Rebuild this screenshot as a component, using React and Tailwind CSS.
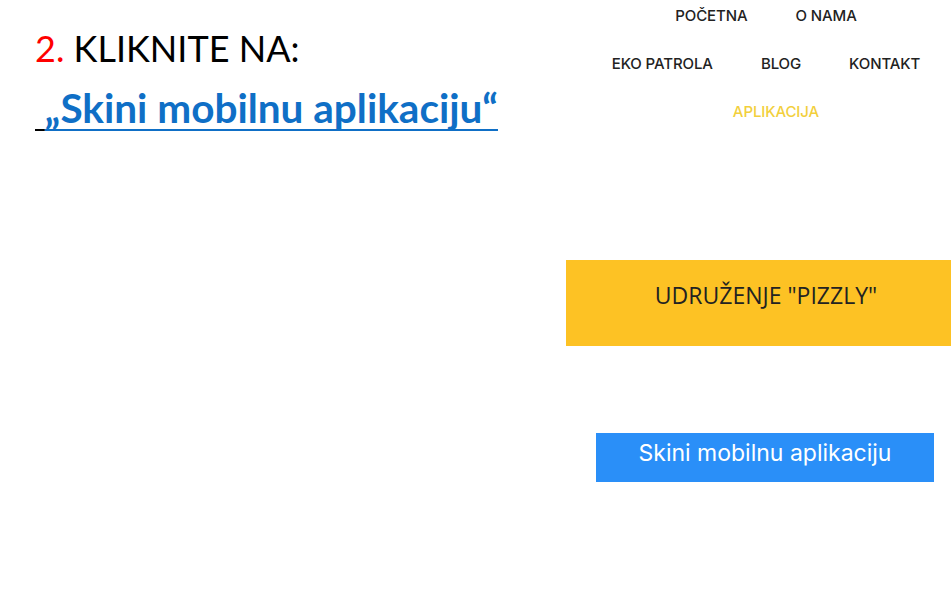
import React from "react";

const navRows = [
  ["POČETNA", "O NAMA"],
  ["EKO PATROLA", "BLOG", "KONTAKT"],
];

export default function App() {
  return (
    <div className="w-[951px] h-[613px] overflow-hidden bg-white flex">
      {/* Left: document text */}
      <div className="w-[566px] shrink-0 pl-[35px] pt-[22px] font-['Lato',sans-serif]">
        <p className="text-[36px] leading-[52px] text-black">
          <span className="text-[#ff0000]">2.</span> KLIKNITE NA:
        </p>
        <p className="mt-[8px] text-[40.5px] leading-[52px] font-bold">
          <span className="underline decoration-black decoration-2 underline-offset-[6px]">{"\u00a0"}</span>
          <span className="text-[#0f6fc6] underline decoration-[#0f6fc6] decoration-2 underline-offset-[6px] [text-decoration-skip-ink:none]">
            „Skini mobilnu aplikaciju“
          </span>
        </p>
      </div>

      {/* Right: website screenshot */}
      <div className="w-[400px] shrink-0 flex flex-col font-['Inter',sans-serif]">
        <nav className="pt-[6px] flex flex-col gap-[28px]">
          {navRows.map((row, i) => (
            <ul key={i} className="flex justify-center h-[20px] items-center">
              {row.map((item) => (
                <li key={item} className="px-6 text-[15px] font-medium text-[#222] tracking-[-0.1px]">
                  {item}
                </li>
              ))}
            </ul>
          ))}
          <div className="flex justify-center h-[20px] items-center">
            <span className="pl-[20px] text-[15px] font-medium text-[#f2cf3c] tracking-[-0.1px]">APLIKACIJA</span>
          </div>
        </nav>

        <div className="mt-[138px] h-[86px] bg-[#fdc224] flex items-center justify-center pb-[15px]">
          <span className="text-[23px] text-[#222] font-['Open_Sans',sans-serif]">UDRUŽENJE "PIZZLY"</span>
        </div>

        <button className="mt-[87px] ml-[30px] w-[338px] h-[49px] bg-[#2a8ff8] text-white text-[23px] flex items-center justify-center pb-[8px]">
          Skini mobilnu aplikaciju
        </button>
      </div>
    </div>
  );
}
